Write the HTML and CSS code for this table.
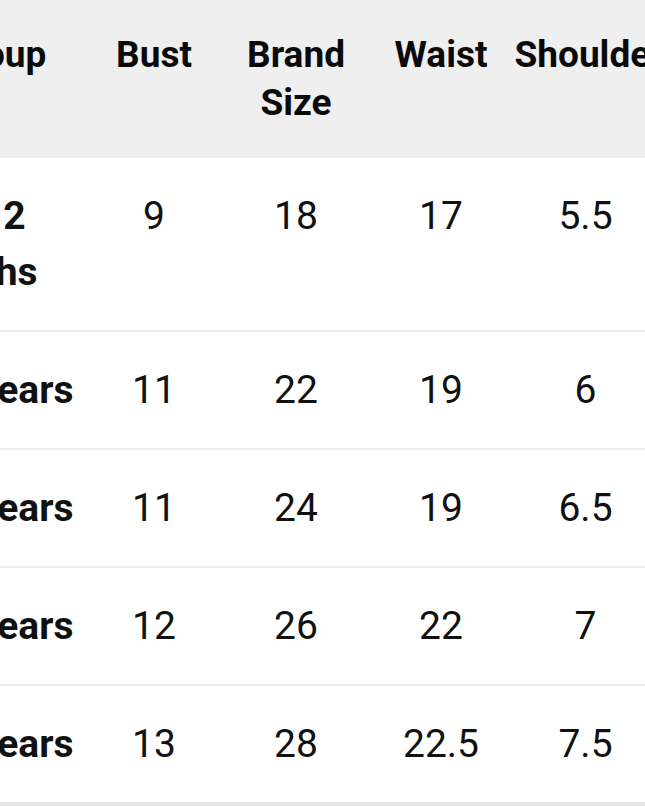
FILE: index.html
```html
<!DOCTYPE html>
<html lang="en">
<head>
<meta charset="utf-8">
<title>Size Chart</title>
<link rel="stylesheet" href="styles.css">
</head>
<body>
<table class="size-table">
  <colgroup>
    <col class="col-age">
    <col class="col-bust">
    <col class="col-brand">
    <col class="col-waist">
    <col class="col-shoulder">
  </colgroup>
  <thead>
    <tr>
      <th>Age Group</th>
      <th>Bust</th>
      <th>Brand Size</th>
      <th>Waist</th>
      <th class="nowrap">Shoulder</th>
    </tr>
  </thead>
  <tbody>
    <tr><td class="age">6 to 12 Months</td><td>9</td><td>18</td><td>17</td><td>5.5</td></tr>
    <tr><td class="age">1-2 Years</td><td>11</td><td>22</td><td>19</td><td>6</td></tr>
    <tr><td class="age">2-3 Years</td><td>11</td><td>24</td><td>19</td><td>6.5</td></tr>
    <tr><td class="age">3-4 Years</td><td>12</td><td>26</td><td>22</td><td>7</td></tr>
    <tr><td class="age">4-5 Years</td><td>13</td><td>28</td><td>22.5</td><td>7.5</td></tr>
  </tbody>
</table>
</body>
</html>
```
FILE: styles.css
```css
html, body {
  margin: 0;
  padding: 0;
  background: #ffffff;
  overflow: hidden;
}
body {
  font-family: Roboto, "Liberation Sans", sans-serif;
  color: #111111;
}
.size-table {
  border-collapse: collapse;
  table-layout: fixed;
  width: 823px;
  margin-left: -166.5px;
}
.col-age { width: 250px; }
.col-bust { width: 141px; }
.col-brand { width: 143px; }
.col-waist { width: 147px; }
.col-shoulder { width: 142px; }

.size-table th,
.size-table td {
  vertical-align: top;
}
.size-table th {
  background: #efefef;
  font-size: 37px;
  font-weight: 700;
  line-height: 48px;
  padding: 31px 0;
  text-align: center;
  color: #0a0a0a;
}
.size-table th.nowrap {
  white-space: nowrap;
}
.size-table td {
  font-size: 39px;
  font-weight: 400;
  line-height: 56px;
  padding: 30px 0;
  text-align: center;
  border-bottom: 2px solid #ececec;
}
.size-table td.age {
  font-weight: 700;
  text-align: left;
  padding-left: 71px;
}
.size-table tbody tr:last-child td {
  border-bottom: 4px solid #e6e6e6;
}
```
